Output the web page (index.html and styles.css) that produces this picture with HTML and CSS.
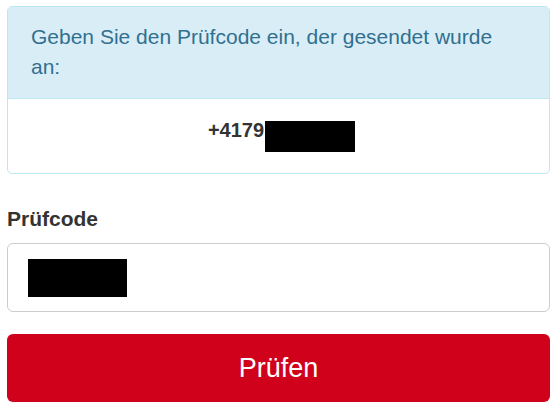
FILE: index.html
```html
<!DOCTYPE html>
<html lang="de">
<head>
    <meta charset="UTF-8">
    <meta name="viewport" content="width=device-width, initial-scale=1.0">
    <title>Prüfcode</title>
    <link rel="stylesheet" href="styles.css">
</head>
<body>
    <div class="info-panel">
        <div class="info-heading">Geben Sie den Prüfcode ein, der gesendet wurde an:</div>
        <div class="info-body">
            <span class="phone">+4179</span>
            <span class="redacted phone-mask"></span>
        </div>
    </div>
    <form class="verify-form" onsubmit="return false;">
        <label class="field-label" for="codeInput">Prüfcode</label>
        <div class="field" id="codeInput">
            <span class="redacted code-mask"></span>
        </div>
        <button type="submit" class="submit-button">Prüfen</button>
    </form>
</body>
</html>
```

FILE: styles.css
```css
* {
    margin: 0;
    padding: 0;
    box-sizing: border-box;
}
body {
    font-family: "Liberation Sans", Arial, sans-serif;
    background: #fff;
    color: #333;
    padding: 6px 7px;
}
.info-panel {
    border: 1px solid #bce8f1;
    border-radius: 5px;
    overflow: hidden;
}
.info-heading {
    background: #d9edf7;
    color: #31708f;
    font-size: 21px;
    line-height: 30px;
    padding: 15px 40px 16px 23px;
    border-bottom: 1px solid #bce8f1;
}
.info-body {
    display: flex;
    justify-content: center;
    align-items: flex-start;
    padding: 19px 15px 21px 21px;
}
.phone {
    font-size: 20px;
    font-weight: bold;
    line-height: 24px;
    color: #333;
}
.redacted {
    display: inline-block;
    background: #000;
}
.phone-mask {
    width: 90px;
    height: 31px;
    margin-top: 3px;
    margin-left: 1px;
}
.verify-form {
    display: flex;
    flex-direction: column;
}
.field-label {
    font-size: 21px;
    font-weight: bold;
    line-height: 24px;
    margin-top: 33px;
    margin-bottom: 12px;
    color: #333;
}
.field {
    height: 69px;
    border: 1px solid #ccc;
    border-radius: 6px;
    padding: 15px 20px;
    background: #fff;
}
.code-mask {
    width: 99px;
    height: 38px;
}
.submit-button {
    margin-top: 22px;
    height: 68px;
    border: none;
    border-radius: 6px;
    background: #d0021b;
    color: #fff;
    font-family: inherit;
    font-size: 27px;
    cursor: pointer;
}
```
